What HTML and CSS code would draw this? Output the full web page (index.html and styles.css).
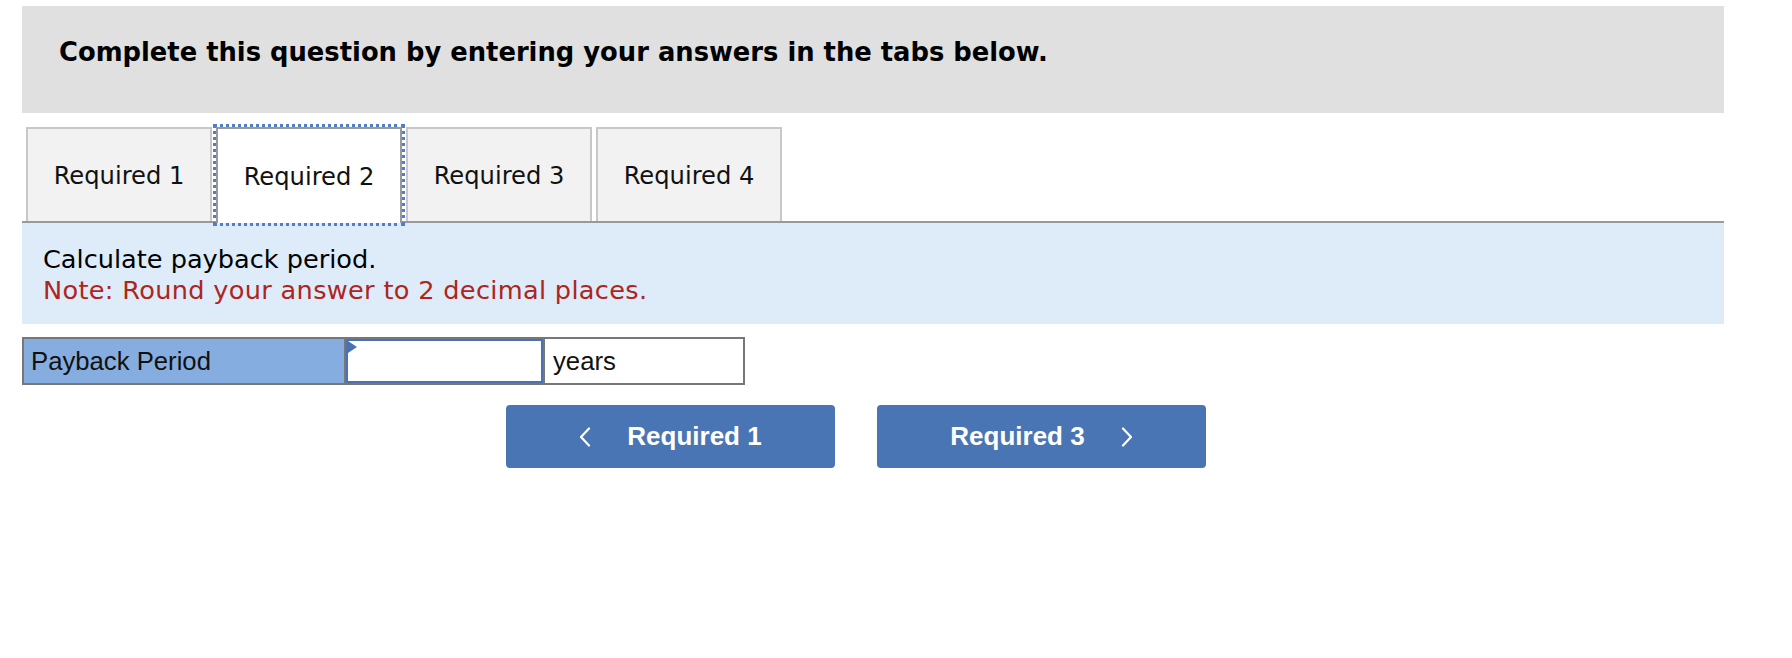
FILE: index.html
```html
<!DOCTYPE html>
<html lang="en">
<head>
<meta charset="utf-8">
<title>Payback period</title>
<link rel="stylesheet" href="styles.css">
</head>
<body>
<div class="page">
  <div class="banner">Complete this question by entering your answers in the tabs below.</div>

  <div class="tabs">
    <div class="tab">Required 1</div>
    <div class="tab active">Required 2</div>
    <div class="tab">Required 3</div>
    <div class="tab">Required 4</div>
  </div>

  <div class="info">
    <div class="info-line">Calculate payback period.</div>
    <div class="info-line note">Note: Round your answer to 2 decimal places.</div>
  </div>

  <div class="answer-row">
    <div class="cell label">Payback Period</div>
    <div class="cell input"></div>
    <div class="cell unit">years</div>
  </div>

  <div class="nav">
    <button class="nav-btn">
      <svg class="chev" width="12" height="20" viewBox="0 0 12 20"><polyline points="10,1.5 2,10 10,18.5" fill="none" stroke="#fff" stroke-width="2.2" stroke-linecap="round" stroke-linejoin="round"/></svg>
      <span>Required 1</span>
    </button>
    <button class="nav-btn">
      <span>Required 3</span>
      <svg class="chev" width="12" height="20" viewBox="0 0 12 20"><polyline points="2,1.5 10,10 2,18.5" fill="none" stroke="#fff" stroke-width="2.2" stroke-linecap="round" stroke-linejoin="round"/></svg>
    </button>
  </div>
</div>
</body>
</html>
```

FILE: styles.css
```css
html, body {
  margin: 0;
  padding: 0;
  background: #ffffff;
}

.page {
  padding-left: 22px;
  padding-top: 6px;
  width: 1702px;
}

.banner {
  box-sizing: border-box;
  height: 107px;
  background: #e0e0e0;
  padding: 31px 0 0 37px;
  font-family: "DejaVu Sans", Verdana, sans-serif;
  font-weight: bold;
  font-size: 25.8px;
  line-height: 30px;
  color: #000;
}

.tabs {
  display: flex;
  gap: 4px;
  margin-top: 14px;
  padding-left: 4px;
  height: 94px;
  border-bottom: 2px solid #999999;
}

.tab {
  box-sizing: border-box;
  width: 186px;
  height: 94px;
  background: #f2f2f2;
  border: 2px solid #c8c8c8;
  border-bottom: none;
  display: flex;
  align-items: center;
  justify-content: center;
  font-family: "DejaVu Sans", Verdana, sans-serif;
  font-size: 24.2px;
  color: #111;
  padding-top: 2px;
}

.tab.active {
  background: #ffffff;
  border-color: #999999;
  height: 96px;
  position: relative;
  z-index: 1;
  outline: 3px dotted #4f7fca;
  outline-offset: 0px;
}

.info {
  background: #deebf8;
  padding: 21px 0 18px 21px;
  font-family: "DejaVu Sans", Verdana, sans-serif;
  font-size: 25.6px;
  line-height: 31px;
  color: #000;
}

.note {
  color: #ae2420;
  letter-spacing: 0.32px;
}

.answer-row {
  display: flex;
  gap: 2px;
  margin-top: 13px;
  width: 723px;
  height: 48px;
  box-sizing: border-box;
  padding: 2px;
  background: #777777;
}

.cell {
  box-sizing: border-box;
  height: 44px;
  display: flex;
  align-items: center;
  font-family: "Liberation Sans", Arial, sans-serif;
  font-size: 25.7px;
  color: #111;
}

.label {
  width: 320px;
  background: #85addf;
  padding-left: 7px;
}

.input {
  width: 197px;
  background: #ffffff;
  border: 2px solid #4a72b2;
  position: relative;
}

.input::before {
  content: "";
  position: absolute;
  left: 0;
  top: 0;
  width: 0;
  height: 0;
  border-top: 6px solid transparent;
  border-bottom: 6px solid transparent;
  border-left: 9px solid #4a72b2;
}

.unit {
  width: 198px;
  background: #ffffff;
  padding-left: 8px;
}

.nav {
  display: flex;
  gap: 42px;
  margin-top: 20px;
  padding-left: 484px;
}

.nav-btn {
  box-sizing: border-box;
  width: 329px;
  height: 63px;
  background: #4a75b4;
  border: none;
  border-radius: 4px;
  display: flex;
  align-items: center;
  justify-content: center;
  gap: 36px;
  font-family: "Liberation Sans", Arial, sans-serif;
  font-weight: bold;
  font-size: 26px;
  color: #ffffff;
  padding: 0;
}

.chev {
  display: block;
}
```
